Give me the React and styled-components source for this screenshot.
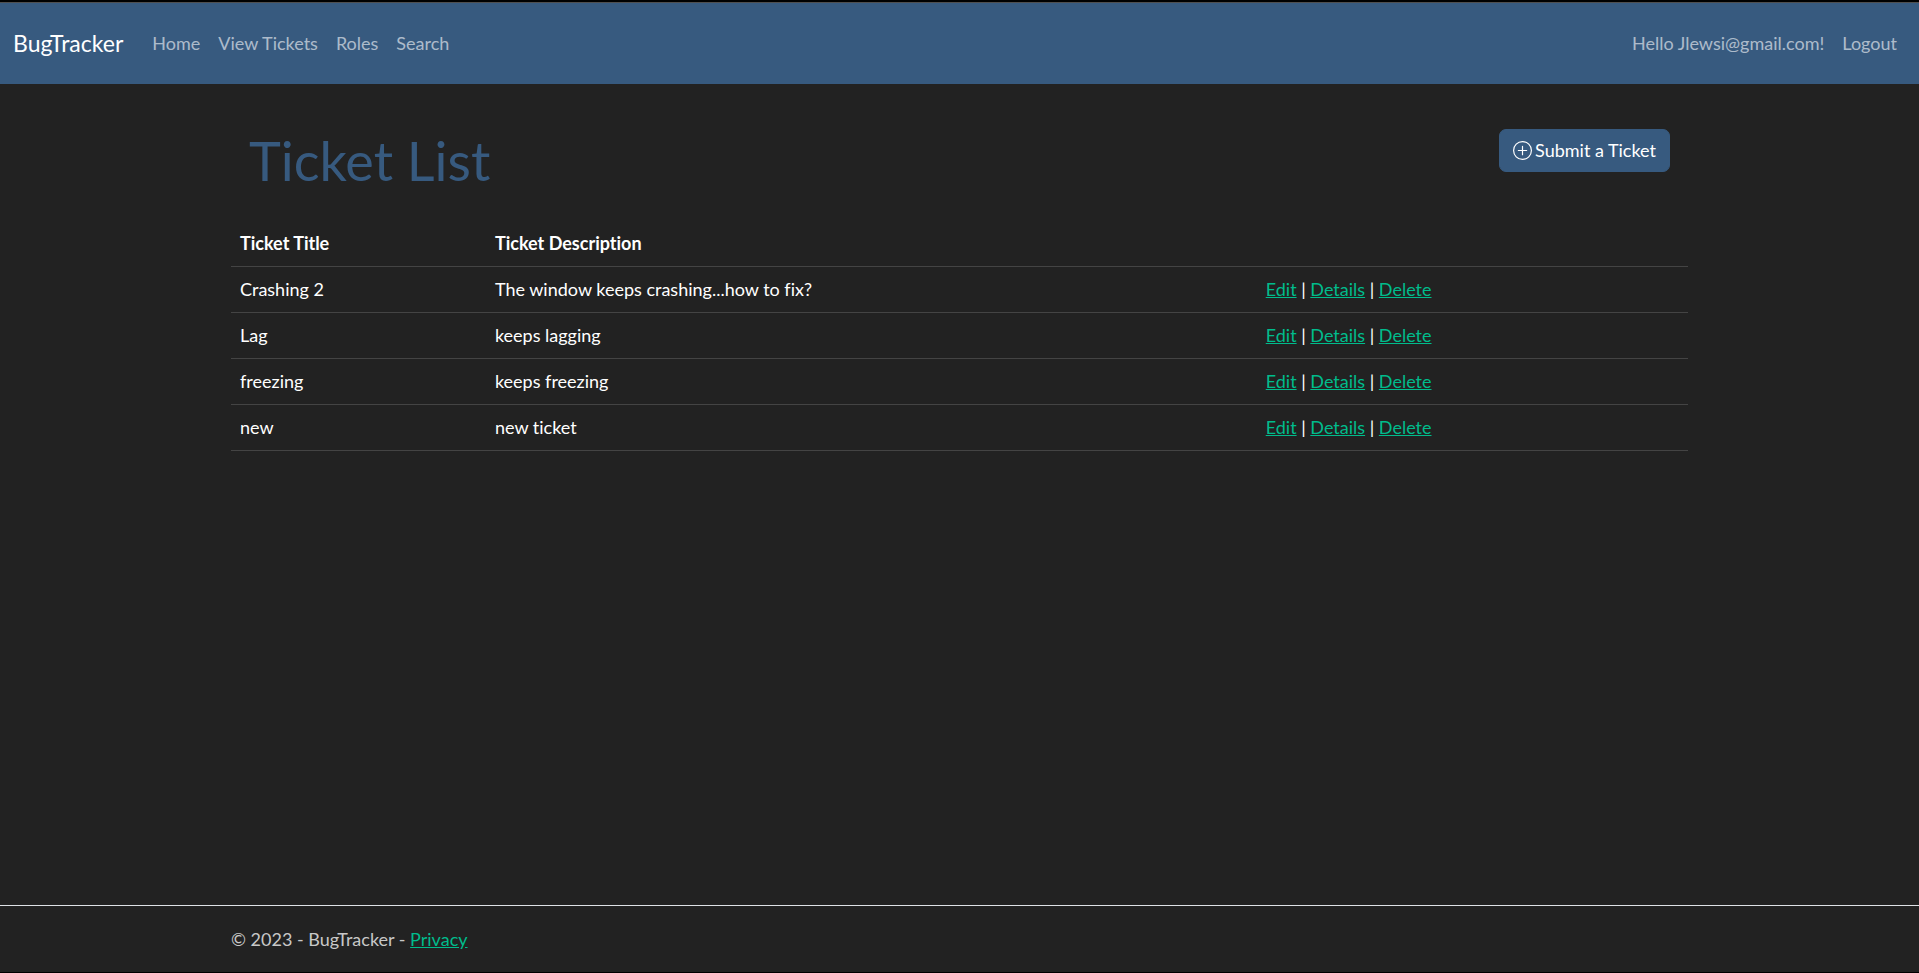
import React from "react";
import styled, { createGlobalStyle } from "styled-components";
import { BsPlusCircle } from "react-icons/bs";

const tickets = [
  { id: 1, title: "Crashing 2", description: "The window keeps crashing...how to fix?" },
  { id: 2, title: "Lag", description: "keeps lagging" },
  { id: 3, title: "freezing", description: "keeps freezing" },
  { id: 4, title: "new", description: "new ticket" },
];

const links = ["Home", "View Tickets", "Roles", "Search"];

const Navbar = () => (
  <NavComponent>
    <Brand href="#">BugTracker</Brand>
    <NavList>
      {links.map((link) => (
        <li key={link}>
          <NavLink href="#">{link}</NavLink>
        </li>
      ))}
    </NavList>
    <NavList>
      <li>
        <NavLink href="#">Hello Jlewsi@gmail.com!</NavLink>
      </li>
      <li>
        <LogoutButton type="button">Logout</LogoutButton>
      </li>
    </NavList>
  </NavComponent>
);

const TicketTable = ({ tickets }) => (
  <Table>
    <thead>
      <tr>
        <HeadCell $width="17.5%">Ticket Title</HeadCell>
        <HeadCell $width="52.9%">Ticket Description</HeadCell>
        <HeadCell />
      </tr>
    </thead>
    <tbody>
      {tickets.map((ticket) => (
        <tr key={ticket.id}>
          <Cell>{ticket.title}</Cell>
          <Cell>{ticket.description}</Cell>
          <Cell>
            <Link href="#">Edit</Link> | <Link href="#">Details</Link> | <Link href="#">Delete</Link>
          </Cell>
        </tr>
      ))}
    </tbody>
  </Table>
);

const App = () => (
  <Page>
    <GlobalStyle />
    <Navbar />
    <Main>
      <Container>
        <TitleRow>
          <Title>Ticket List</Title>
          <SubmitButton type="button">
            <BsPlusCircle size={19} />
            Submit a Ticket
          </SubmitButton>
        </TitleRow>
        <TicketTable tickets={tickets} />
      </Container>
    </Main>
    <Footer>
      <Container>
        &copy; 2023 - BugTracker - <Link href="#">Privacy</Link>
      </Container>
    </Footer>
  </Page>
);

export default App;

////////////////////////// CSS //////////////////////////
const GlobalStyle = createGlobalStyle`
  * {
    box-sizing: border-box;
  }
  body {
    margin: 0;
    background: #222;
    color: #fff;
    font-family: Lato, sans-serif;
    font-size: 18px;
    font-variant-ligatures: none;
    line-height: 27px;
  }
`;

const Page = styled.div`
  display: flex;
  flex-direction: column;
  min-height: 100vh;
  border-top: 2px solid #000;
  border-bottom: 1px solid #000;
`;

const Container = styled.div`
  max-width: 1485px;
  margin: 0 auto;
  padding: 0 14px;
`;

const NavComponent = styled.nav`
  display: flex;
  align-items: center;
  padding: 18px 13px;
  background: #375a7f;
  border-top: 1px solid #4f4f4f;
`;

const Brand = styled.a`
  margin-right: 20px;
  color: #fff;
  font-size: 23px;
  line-height: 35px;
  text-decoration: none;
`;

const NavList = styled.ul`
  display: flex;
  margin: 0;
  padding: 0;
  list-style: none;
  &:last-child {
    margin-left: auto;
  }
`;

const NavLink = styled.a`
  display: block;
  padding: 9px;
  color: rgba(255, 255, 255, 0.6);
  text-decoration: none;
  &:hover {
    color: #fff;
  }
`;

const LogoutButton = styled(NavLink).attrs({ as: "button" })`
  border: 0;
  background: none;
  font: inherit;
  cursor: pointer;
`;

const Main = styled.main`
  flex: 1;
  padding-top: 45px;
`;

const TitleRow = styled.div`
  display: flex;
  justify-content: space-between;
  align-items: flex-start;
  padding: 0 18px 29px;
`;

const Title = styled.h1`
  margin: 0;
  color: #375a7f;
  font-size: 54px;
  font-weight: 400;
  line-height: 63px;
`;

const SubmitButton = styled.button`
  display: flex;
  align-items: center;
  gap: 3px;
  padding: 7px 13px;
  border: 1px solid #375a7f;
  border-radius: 7px;
  background: #375a7f;
  color: #fff;
  font: inherit;
  font-variant-ligatures: none;
  cursor: pointer;
`;

const Table = styled.table`
  width: 100%;
  table-layout: fixed;
  border-collapse: collapse;
`;

const Cell = styled.td`
  padding: 9px;
  border-bottom: 1px solid #444;
`;

const HeadCell = styled.th`
  width: ${(props) => props.$width || "auto"};
  padding: 9px;
  border-bottom: 1px solid #444;
  font-weight: 700;
  text-align: left;
`;

const Link = styled.a`
  color: #00bc8c;
  text-decoration: underline;
`;

const Footer = styled.footer`
  border-top: 1px solid #dee2e6;
  color: #c8c8c8;
  line-height: 66px;
`;
